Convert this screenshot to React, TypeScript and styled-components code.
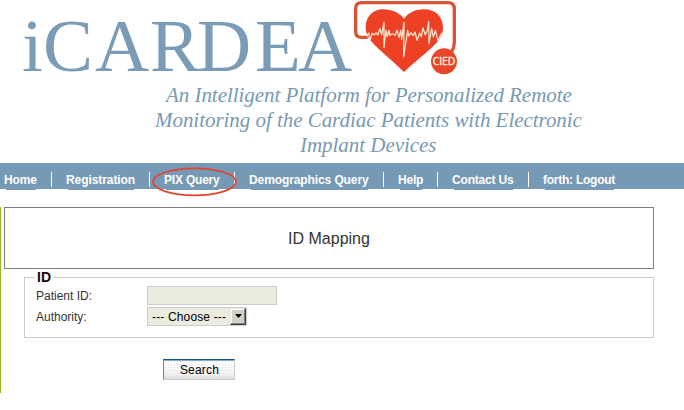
import React from "react";
import styled, { createGlobalStyle } from "styled-components";

const GlobalStyle = createGlobalStyle`
  * { box-sizing: border-box; }
  body { margin: 0; background: #fff; font-family: "Liberation Sans", Arial, sans-serif; }
`;

const Page = styled.div`
  width: 684px;
  height: 410px;
  overflow: hidden;
  background: #fff;
`;

const Header = styled.header`
  height: 163px;
`;

const Logo = styled.svg`
  display: block;
  width: 684px;
  height: 83px;
  overflow: visible;
`;

const Tagline = styled.p`
  margin: 0 0 0 140px;
  width: 456px;
  font: italic 21px/25px "Liberation Serif", "Times New Roman", serif;
  letter-spacing: -0.04px;
  color: #7799b2;
  white-space: nowrap;
`;

const TagLine = styled.span<{ $indent: number }>`
  display: block;
  padding-left: ${(p) => p.$indent}px;
`;

const Nav = styled.nav`
  position: relative;
  display: flex;
  height: 26px;
  padding-left: 4px;
  background: #7699b5;
`;

const NavItem = styled.div<{ $width: number }>`
  display: flex;
  flex: none;
  width: ${(p) => p.$width + 29}px;
  height: 27px;

  &:not(:last-of-type)::after {
    content: "";
    width: 1px;
    height: 15px;
    margin: 9px 0 0 14px;
    background: #fff;
  }
`;

const NavLink = styled.a<{ $width: number; $tracking: number }>`
  width: ${(p) => p.$width}px;
  height: 27px;
  padding-top: 9px;
  font-size: 12px;
  line-height: 16px;
  font-weight: bold;
  letter-spacing: ${(p) => p.$tracking}px;
  color: #fff;
  white-space: nowrap;
  background: linear-gradient(#7699b5, #7699b5) 2px 26px / calc(100% - 3px) 1px no-repeat;
`;

const Highlight = styled.svg`
  position: absolute;
  left: 150px;
  top: 3px;
  width: 90px;
  height: 32px;
`;

const Content = styled.main`
  width: 684px;
  height: 186px;
  margin-top: 18px;
  padding-left: 3px;
  border-left: 1px solid #94b92c;
`;

const TitlePanel = styled.h1`
  display: flex;
  align-items: center;
  justify-content: center;
  width: 650px;
  height: 62px;
  margin: 0;
  padding-top: 1px;
  border: 1px solid #808080;
  font-size: 16px;
  font-weight: normal;
  color: #333;
`;

const Group = styled.fieldset`
  width: 630px;
  height: 69px;
  margin: 0 0 0 20px;
  padding: 0 0 0 11px;
  border: 1px solid #ccc;
`;

const Legend = styled.legend`
  margin-left: -1px;
  padding: 0 2px;
  height: 17px;
  font-size: 14px;
  line-height: 17px;
  font-weight: bold;
  color: #180808;
`;

const Row = styled.div`
  display: flex;
  align-items: center;
  height: 19px;
  margin-bottom: 2px;
`;

const Label = styled.label`
  width: 111px;
  font-size: 12px;
  color: #333;
`;

const TextField = styled.input`
  width: 130px;
  height: 19px;
  padding: 0 4px;
  border: 1px solid #ccc;
  border-radius: 0;
  outline: 0;
  background: #ebecdf;
`;

const Choice = styled.button`
  display: flex;
  justify-content: space-between;
  width: 100px;
  height: 19px;
  padding: 0 0 0 4px;
  border: 1px solid #ccc;
  background: #ebecdf;
  font: 12px/18px "Liberation Sans", Arial, sans-serif;
  letter-spacing: 0.15px;
  color: #000;
  white-space: nowrap;
`;

const Arrow = styled.span`
  display: flex;
  align-items: center;
  justify-content: center;
  width: 16px;
  height: 17px;
  padding-bottom: 1px;
  border: 1px solid;
  border-color: #e8e5df #404040 #404040 #e8e5df;
  box-shadow: inset -1px -1px #808080, inset 1px 1px #fff;
  background: #d4d0c8;
`;

const SearchButton = styled.button`
  display: block;
  width: 72px;
  height: 21px;
  margin: 21px 0 0 159px;
  padding: 2px 0 0 1px;
  border: 1px solid #c5cbcf;
  border-top-color: #175783;
  border-left-color: #5c8aab;
  background:
    radial-gradient(circle, #dedede 0.5px, transparent 0.8px) 0 0 / 3px 3px,
    linear-gradient(#fff 15%, #f2f2f2 75%, #dedede);
  box-shadow: inset 0 1px #8eadc3;
  font: 12px/17px "Liberation Sans", Arial, sans-serif;
  letter-spacing: 0.2px;
  color: #000;
`;

const navigation = [
  { label: "Home", width: 33, tracking: -0.1 },
  { label: "Registration", width: 69, tracking: -0.08 },
  { label: "PIX Query", width: 56, tracking: -0.2 },
  { label: "Demographics Query", width: 120, tracking: -0.1 },
  { label: "Help", width: 25, tracking: -0.2 },
  { label: "Contact Us", width: 62, tracking: -0.18 },
  { label: "forth: Logout", width: 72, tracking: -0.25 },
];

function Brand() {
  return (
    <Logo viewBox="0 0 684 83" role="img" aria-label="iCARDEA">
      <text
        x="22 43 95 150 197 255 298"
        y="71"
        fill="#7b9cb7"
        fontFamily="Liberation Serif, Times New Roman, serif"
        fontSize="75"
      >
        iCARDEA
      </text>
      <g transform="translate(340 0) scale(.33333)">
        <path
          d="M83 112H64Q47 112 47 95V25Q47 8 65 8H324Q343 8 343 27V127Q343 143 335 155"
          fill="none"
          stroke="#d75436"
          strokeWidth="10"
        />
        <path
          d="M192 216C168 193 137 167 111 142C89 121 77 105 77 81C77 50 99 28 130 28C158 28 178 39 192 56C206 38 226 28 253 28C288 28 309 52 309 84C309 108 296 124 275 143C248 168 215 193 192 216Z"
          fill="#ed4125"
        />
        <path
          d="M80 108L86 99L91 119L96 100L103 105L108 98L113 105L120 86L125 105L132 67V142L138 91L142 110L147 91L150 106L157 101L165 106L171 91L177 112L182 91L185 118L192 67L191 170L203 91L206 108L213 98L219 107L225 96L231 121L239 99L244 110L249 84L256 105L262 90L266 64L267 131L275 85L280 111L286 91L294 122L305 99"
          fill="none"
          stroke="#ffe7cf"
          strokeWidth="3.8"
          strokeLinejoin="round"
        />
        <circle cx="312" cy="184" r="39" fill="#e84529" />
        <text
          x="312"
          y="196"
          textAnchor="middle"
          textLength="68"
          lengthAdjust="spacingAndGlyphs"
          fill="#fff1dc"
          stroke="#fff1dc"
          strokeWidth="1.2"
          fontFamily="Open Sans, sans-serif"
          fontSize="33"
        >
          CIED
        </text>
      </g>
    </Logo>
  );
}

export default function App() {
  return (
    <Page>
      <GlobalStyle />
      <Header>
        <Brand />
        <Tagline>
          <TagLine $indent={26}>An Intelligent Platform for Personalized Remote</TagLine>
          <TagLine $indent={15}>Monitoring of the Cardiac Patients with Electronic</TagLine>
          <TagLine $indent={160}>Implant Devices</TagLine>
        </Tagline>
      </Header>
      <Nav>
        {navigation.map((item) => (
          <NavItem key={item.label} $width={item.width}>
            <NavLink $width={item.width} $tracking={item.tracking}>{item.label}</NavLink>
          </NavItem>
        ))}
        <Highlight viewBox="0 0 90 32">
          <ellipse cx="44.5" cy="15.8" rx="41.5" ry="13.5" fill="none" stroke="#e3442c" strokeWidth="1.8" />
        </Highlight>
      </Nav>
      <Content>
        <TitlePanel>ID Mapping</TitlePanel>
        <Group>
          <Legend>ID</Legend>
          <Row>
            <Label htmlFor="patient">Patient ID:</Label>
            <TextField id="patient" />
          </Row>
          <Row>
            <Label>Authority:</Label>
            <Choice type="button">
              --- Choose ---
              <Arrow>
                <svg width="7" height="4" viewBox="0 0 7 4"><path d="M0 0H7L3.5 4Z" /></svg>
              </Arrow>
            </Choice>
          </Row>
        </Group>
        <SearchButton type="button">Search</SearchButton>
      </Content>
    </Page>
  );
}
